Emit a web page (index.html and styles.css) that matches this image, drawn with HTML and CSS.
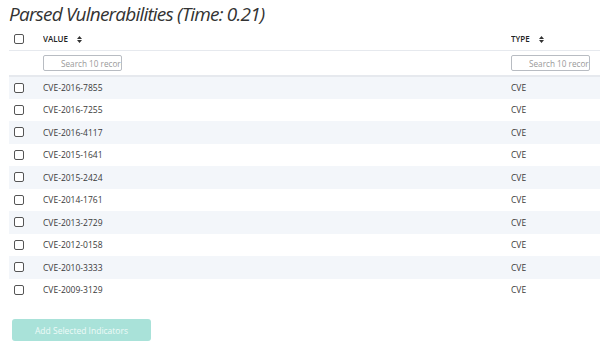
FILE: index.html
```html
<!DOCTYPE html>
<html lang="en">
<head>
    <meta charset="UTF-8">
    <title>Parsed Vulnerabilities</title>
    <link rel="stylesheet" href="styles.css">
</head>
<body>
    <h2 class="title">Parsed Vulnerabilities (Time: 0.21)</h2>
    <table class="grid">
        <thead>
            <tr class="head">
                <th class="chk"><span class="box"></span></th>
                <th class="val">VALUE <svg class="sort" width="5" height="7" viewBox="0 0 5 7"><path d="M0 3L2.5 0L5 3Z M0 4L2.5 7L5 4Z" fill="#333"/></svg></th>
                <th class="typ">TYPE <svg class="sort" width="5" height="7" viewBox="0 0 5 7"><path d="M0 3L2.5 0L5 3Z M0 4L2.5 7L5 4Z" fill="#333"/></svg></th>
            </tr>
            <tr class="filters">
                <th></th>
                <th><input class="search" type="text" placeholder="Search 10 records..."></th>
                <th><input class="search" type="text" placeholder="Search 10 records..."></th>
            </tr>
        </thead>
        <tbody>
            <tr><td class="chk"><span class="box"></span></td><td>CVE-2016-7855</td><td>CVE</td></tr>
            <tr><td class="chk"><span class="box"></span></td><td>CVE-2016-7255</td><td>CVE</td></tr>
            <tr><td class="chk"><span class="box"></span></td><td>CVE-2016-4117</td><td>CVE</td></tr>
            <tr><td class="chk"><span class="box"></span></td><td>CVE-2015-1641</td><td>CVE</td></tr>
            <tr><td class="chk"><span class="box"></span></td><td>CVE-2015-2424</td><td>CVE</td></tr>
            <tr><td class="chk"><span class="box"></span></td><td>CVE-2014-1761</td><td>CVE</td></tr>
            <tr><td class="chk"><span class="box"></span></td><td>CVE-2013-2729</td><td>CVE</td></tr>
            <tr><td class="chk"><span class="box"></span></td><td>CVE-2012-0158</td><td>CVE</td></tr>
            <tr><td class="chk"><span class="box"></span></td><td>CVE-2010-3333</td><td>CVE</td></tr>
            <tr><td class="chk"><span class="box"></span></td><td>CVE-2009-3129</td><td>CVE</td></tr>
        </tbody>
    </table>
    <button class="add" disabled>Add Selected Indicators</button>
</body>
</html>
```

FILE: styles.css
```css
body{
    margin: 0 0 0 9px;
    font-family: "Open Sans", "Noto Sans", sans-serif;
    color: #333;
    background: #fff;
    overflow: hidden;
}
.title{
    margin: 0;
    padding-top: 1px;
    height: 27px;
    font-size: 19px;
    letter-spacing: -0.8px;
    font-weight: normal;
    font-style: italic;
    color: #333;
    white-space: nowrap;
}
.grid{
    width: 591px;
    table-layout: fixed;
    border-collapse: collapse;
    font-size: 8.5px;
}
.grid td, .grid th{
    padding: 0;
    text-align: left;
    vertical-align: middle;
    overflow: hidden;
    white-space: nowrap;
}
.grid td{
    color: #3a3a3a;
}
.grid .chk{
    width: 29px;
    padding-left: 5px;
}
.val{
    width: 468px;
}
.head{
    height: 22px;
    border-bottom: 1px solid #e6e9ee;
}
.head th{
    font-weight: 600;
    font-size: 8px;
    color: #222;
}
.sort{
    vertical-align: -1px;
    margin-left: 7px;
}
.filters{
    height: 26px;
    border-bottom: 2px solid #e6e9ee;
}
.search{
    box-sizing: border-box;
    width: 79px;
    height: 16px;
    padding: 0 0 0 17px;
    border: 1px solid #b8bcc2;
    border-radius: 2px;
    font-family: inherit;
    font-size: 8.2px;
    margin-top: 1px;
}
.search::placeholder{
    color: #999;
}
tbody tr{
    height: 22.5px;
}
tbody tr:nth-child(odd){
    background-color: #f3f6fa;
}
.box{
    display: block;
    box-sizing: border-box;
    width: 10px;
    height: 10px;
    border: 1.4px solid #555;
    border-radius: 2px;
    background: #fff;
}
.add{
    display: block;
    margin: 18px 0 0 3px;
    width: 139px;
    height: 22px;
    border: none;
    border-radius: 3px;
    background-color: #a9e2d9;
    color: #eefaf8;
    font-family: inherit;
    font-size: 8.5px;
}
```
